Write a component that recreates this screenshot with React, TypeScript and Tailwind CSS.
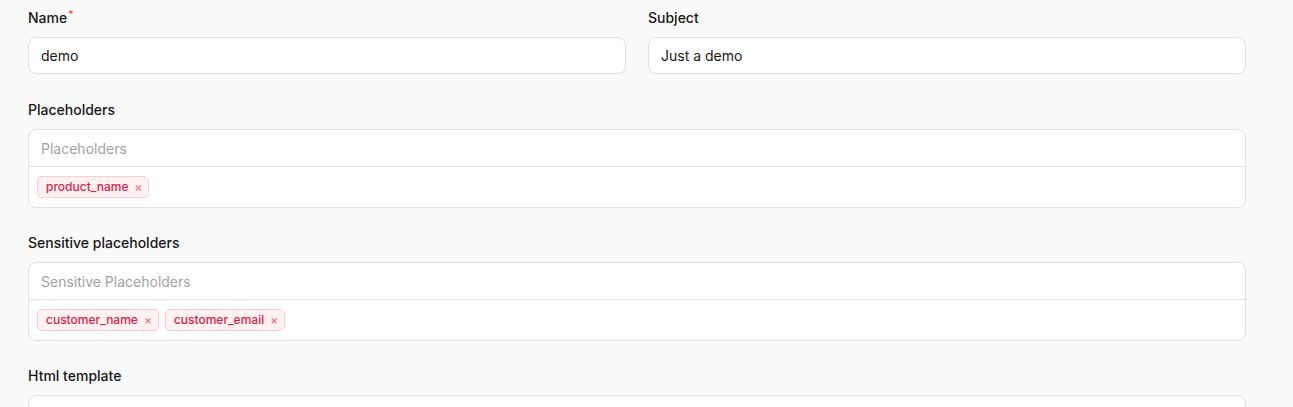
import React from "react";

function Tag({ label }: { label: string }) {
  return (
    <span className="inline-flex h-[22px] items-center gap-[6px] rounded-[5px] border border-[#fecdd3] bg-[#fff1f2] pl-2 pr-[6px] text-[12px] font-medium text-[#e11d48]">
      {label}
      <span className="text-[12px] leading-none text-[#f87193]">×</span>
    </span>
  );
}

function Field({ label, required, children }: { label: string; required?: boolean; children: React.ReactNode }) {
  return (
    <div className="flex flex-col gap-[9px]">
      <label className="h-5 text-[14px] font-medium leading-5 text-[#171717]">
        {label}
        {required && <sup className="ml-[1px] text-[10px] text-[#ef4444]">*</sup>}
      </label>
      {children}
    </div>
  );
}

function TagBox({ placeholder, tags }: { placeholder: string; tags: string[] }) {
  return (
    <div className="overflow-hidden rounded-[8px] border border-[#e2e2e2] bg-white">
      <input
        placeholder={placeholder}
        className="h-[37px] w-full border-b border-[#e2e2e2] px-3 text-[14px] text-[#171717] outline-none placeholder:text-[#a3a3a3]"
      />
      <div className="flex h-10 items-center gap-[6px] px-2">
        {tags.map((t) => (
          <Tag key={t} label={t} />
        ))}
      </div>
    </div>
  );
}

export default function App() {
  return (
    <div className="min-h-[407px] bg-[#fafafa] pl-[28px] pr-[47px] pt-2 font-['Inter',sans-serif]">
      <div className="flex flex-col gap-[25px]">
        <div className="grid grid-cols-2 gap-[22px] pb-px">
          <Field label="Name" required>
            <input
              defaultValue="demo"
              className="h-[37px] rounded-[8px] border border-[#e2e2e2] bg-white px-3 text-[14px] text-[#171717] outline-none"
            />
          </Field>
          <Field label="Subject">
            <input
              defaultValue="Just a demo"
              className="h-[37px] rounded-[8px] border border-[#e2e2e2] bg-white px-3 text-[14px] text-[#171717] outline-none"
            />
          </Field>
        </div>
        <Field label="Placeholders">
          <TagBox placeholder="Placeholders" tags={["product_name"]} />
        </Field>
        <Field label="Sensitive placeholders">
          <TagBox placeholder="Sensitive Placeholders" tags={["customer_name", "customer_email"]} />
        </Field>
        <Field label="Html template">
          <div className="h-[200px] rounded-[8px] border border-[#e2e2e2] bg-white" />
        </Field>
      </div>
    </div>
  );
}
